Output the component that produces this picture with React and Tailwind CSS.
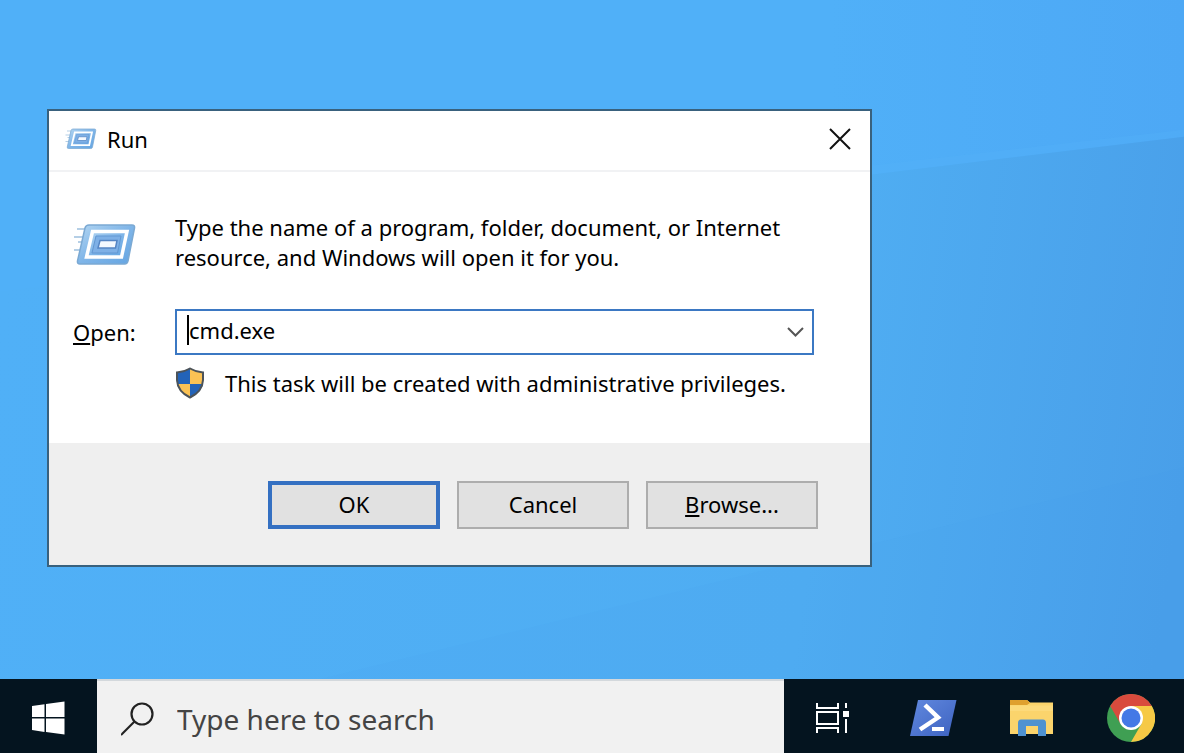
import React from "react";

const RunIcon = ({ className, id }) => (
  <svg className={className} viewBox="0 0 64 46" aria-hidden="true">
    <defs>
      <linearGradient id={id} x1="0" y1="0" x2="1" y2="1">
        <stop offset="0" stopColor="#b3d6f2" />
        <stop offset="0.5" stopColor="#7fb5e8" />
        <stop offset="1" stopColor="#63a4e2" />
      </linearGradient>
    </defs>
    <path d="M4 7h12M1 15h12M5 20h7M1 28h9" stroke="#b5cfe6" strokeWidth="2" />
    <path
      d="M16 3H59q3 0 2.500 3L55 39q-.5 3-3.500 3H7q-3 0-2.500-3L12 6q.8-3 4-3z"
      fill={`url(#${id})`}
      stroke="#7ba9d3"
      strokeWidth="1.500"
    />
    <path d="M19.500 9.500H54L48.500 35H13.500z" fill={`url(#${id})`} stroke="#fff" strokeWidth="3.500" />
    <path d="M23 14H48L44.500 31H19z" fill="#7eb0e6" stroke="#6297d2" strokeWidth="1" />
    <path d="M27 18.500H44L42.500 26H25z" fill="#f4f9ff" stroke="#5585c4" strokeWidth="1.500" />
  </svg>
);

const ShieldIcon = () => (
  <svg className="w-[30px] h-8 shrink-0" viewBox="0 0 30 32" aria-hidden="true">
    <defs>
      <clipPath id="shield">
        <path d="M15 1Q21 5 28.500 5V13Q28 25 15 31Q2 25 1.500 13V5Q9 5 15 1z" />
      </clipPath>
    </defs>
    <g clipPath="url(#shield)">
      <path d="M0 0H15V17H0zM15 17H30V32H15z" fill="#2363b8" />
      <path d="M15 0H30V17H15zM0 17H15V32H0z" fill="#fbc254" />
    </g>
    <path
      d="M15 1.500Q21 5 28 5.500V13Q27.500 24.500 15 30.500Q2.500 24.500 2 13V5.500Q9 5 15 1.500z"
      fill="none"
      stroke="#4c5359"
      strokeWidth="2"
    />
  </svg>
);

const WindowsIcon = () => (
  <svg className="w-[34px] h-[34px]" viewBox="0 0 34 34" fill="#fff" aria-hidden="true">
    <path d="M0 5L12.500 3.300V16H0zM14 3L32.500.5V16H14zM0 17.500H12.500V31L0 29zM14 17.500H32.500V33.500L14 31z" />
  </svg>
);

const SearchIcon = () => (
  <svg className="w-[34px] h-[34px] shrink-0" viewBox="0 0 34 34" fill="none" stroke="#222" strokeWidth="2.200" aria-hidden="true">
    <circle cx="21" cy="12" r="10.500" />
    <path d="M13.500 19.500L0 33" />
  </svg>
);

const TaskViewIcon = () => (
  <svg className="w-9 h-8" viewBox="0 0 36 32" fill="none" stroke="#fff" strokeWidth="2" aria-hidden="true">
    <path d="M1 1V6H22V1M1 31V26H22V31" />
    <rect x="1" y="10" width="21" height="12" />
    <path d="M30 1V6M30 17V31" />
    <rect x="27" y="9" width="6" height="6" fill="#fff" stroke="none" />
  </svg>
);

const PowerShellIcon = () => (
  <svg className="w-12 h-[38px]" viewBox="0 0 48 38" aria-hidden="true">
    <defs>
      <linearGradient id="ps" x1="0" y1="0" x2="1" y2="1">
        <stop offset="0" stopColor="#6189df" />
        <stop offset="1" stopColor="#3d62c0" />
      </linearGradient>
    </defs>
    <path d="M9 1H47.500L39.500 37H1z" fill="url(#ps)" />
    <path d="M16 6L29 18.500L11 30.500" fill="none" stroke="#fff" strokeWidth="4.500" />
    <path d="M23 30H35" stroke="#fff" strokeWidth="4" />
  </svg>
);

const FolderIcon = () => (
  <svg className="w-11 h-[38px]" viewBox="0 0 44 38" aria-hidden="true">
    <path d="M0 1H17L20 3.500H43V35H0z" fill="#fbd46c" />
    <path d="M0 1H17L20 4L17 6H0z" fill="#dfa02f" />
    <path d="M0 6.500H43V12H0z" fill="#fcda7b" />
    <path d="M8 24Q8 20.500 11 20.500H33Q36 20.500 36 24V37H28V27H16V37H8z" fill="#4f92d0" />
    <path d="M16 27H28V35H16z" fill="#fbd46c" />
  </svg>
);

const ChromeIcon = () => (
  <svg className="w-12 h-12" viewBox="0 0 48 48" aria-hidden="true">
    <circle cx="24" cy="24" r="24" fill="#3f9f53" />
    <path d="M24 12H44.800A24 24 0 0 1 24 48L34.400 30z" fill="#f6c945" />
    <path d="M3.200 12A24 24 0 0 1 44.800 12H24L13.600 30z" fill="#d94b3d" />
    <circle cx="24" cy="24" r="12" fill="#fff" />
    <circle cx="24" cy="24" r="9.500" fill="#4479e6" />
  </svg>
);

const taskbarApps = [
  { name: "Task View", icon: <TaskViewIcon /> },
  { name: "Windows PowerShell", icon: <PowerShellIcon /> },
  { name: "File Explorer", icon: <FolderIcon /> },
  { name: "Google Chrome", icon: <ChromeIcon /> },
];

const Wallpaper = () => (
  <svg className="absolute inset-0 w-full h-full" viewBox="0 0 1184 680" preserveAspectRatio="none" aria-hidden="true">
    <defs>
      <linearGradient id="sky" x1="0" y1="0" x2="1" y2="0">
        <stop offset="0" stopColor="#50b0f8" />
        <stop offset="0.7" stopColor="#50b0f8" />
        <stop offset="1" stopColor="#4da8f5" />
      </linearGradient>
      <linearGradient id="lower" gradientUnits="userSpaceOnUse" x1="0" y1="300" x2="1184" y2="480">
        <stop offset="0" stopColor="#50b0f7" />
        <stop offset="0.7" stopColor="#4fadf2" />
        <stop offset="1" stopColor="#499fe9" />
      </linearGradient>
    </defs>
    <path d="M0 0H1184V680H0z" fill="url(#sky)" />
    <path d="M870 166L1184 130V137L870 175z" fill="#56b4f9" fillOpacity="0.3" />
    <path d="M0 292L870 175L1184 137V680H0z" fill="url(#lower)" />
    <path d="M320 680L1184 468V680z" fill="#3f95e6" fillOpacity="0.06" />
  </svg>
);

const RunDialog = () => (
  <section
    role="dialog"
    aria-labelledby="run-title"
    className="relative w-full max-w-[825px] bg-white border-2 border-[#39617d] text-black text-[22px] leading-[30px]"
  >
    {/* Title bar */}
    <header className="flex items-center h-[61px] pl-4 pr-[18px] pb-[3px] border-b-2 border-[#f1f2f4]">
      <RunIcon id="run-small" className="w-8 h-6" />
      <h1 id="run-title" className="ml-[10px] flex-1">Run</h1>
      <button type="button" aria-label="Close" className="p-px">
        <svg className="w-[22px] h-[22px]" viewBox="0 0 22 22" fill="none" stroke="#111" strokeWidth="2" aria-hidden="true">
          <path d="M1 1L21 21M21 1L1 21" />
        </svg>
      </button>
    </header>

    {/* Body */}
    <div className="grid grid-cols-[102px_1fr] pl-6 pr-14 pt-10 pb-11">
      <RunIcon id="run-large" className="w-16 h-[46px] mt-[10px]" />
      <p>
        Type the name of a program, folder, document, or Internet
        <br />
        resource, and Windows will open it for you.
      </p>

      <label htmlFor="run-open" className="mt-9 self-center">
        <span className="underline underline-offset-2">O</span>pen:
      </label>
      <div className="mt-[37px] flex items-center h-[46px] pl-[10px] pr-2 border-2 border-[#3b78c3]">
        <span className="w-[2px] h-[30px] mb-1 bg-black" />
        <input id="run-open" type="text" defaultValue="cmd.exe" className="flex-1 min-w-0 h-full pb-1 outline-none" />
        <button type="button" aria-label="Show recent commands">
          <svg className="w-[17px] h-[10px]" viewBox="0 0 17 10" fill="none" stroke="#555" strokeWidth="2" aria-hidden="true">
            <path d="M1 1L8.500 8.500L16 1" />
          </svg>
        </button>
      </div>

      <div className="col-start-2 mt-3 flex items-center gap-5">
        <ShieldIcon />
        <p>This task will be created with administrative privileges.</p>
      </div>
    </div>

    {/* Buttons */}
    <footer className="flex justify-end gap-[17px] h-[122px] pt-[38px] pr-[52px] bg-[#efefef]">
      <button type="button" className="w-[172px] h-12 pb-[3px] bg-[#e1e1e1] border-4 border-[#3470c2]">OK</button>
      <button type="button" className="w-[172px] h-12 pb-[3px] bg-[#e1e1e1] border-2 border-[#adadad]">Cancel</button>
      <button type="button" className="w-[172px] h-12 pb-[3px] bg-[#e1e1e1] border-2 border-[#adadad]">
        <span className="underline underline-offset-2">B</span>rowse...
      </button>
    </footer>
  </section>
);

const Taskbar = () => (
  <nav className="flex h-[74px] pr-1 bg-[#04141f]">
    <button type="button" aria-label="Start" className="w-[97px] flex items-center justify-center pt-1">
      <WindowsIcon />
    </button>
    <label className="flex-1 min-w-0 flex items-center gap-[22px] pl-6 pt-1 bg-[#f1f1f1] border-t-2 border-[#d3d8dc]">
      <SearchIcon />
      <input
        type="text"
        aria-label="Search"
        placeholder="Type here to search"
        className="flex-1 min-w-0 bg-transparent text-[28px] placeholder:text-[#444] outline-none"
      />
    </label>
    {taskbarApps.map((app) => (
      <button key={app.name} type="button" aria-label={app.name} className="w-[99px] flex items-center justify-center pt-1">
        {app.icon}
      </button>
    ))}
  </nav>
);

const App = () => {
  return (
    <div className="min-h-screen flex flex-col font-['Noto_Sans','Open_Sans',sans-serif]">
      <main className="relative flex-1 px-[47px] pt-[109px] pb-10">
        <Wallpaper />
        <RunDialog />
      </main>
      <Taskbar />
    </div>
  );
};

export default App;
